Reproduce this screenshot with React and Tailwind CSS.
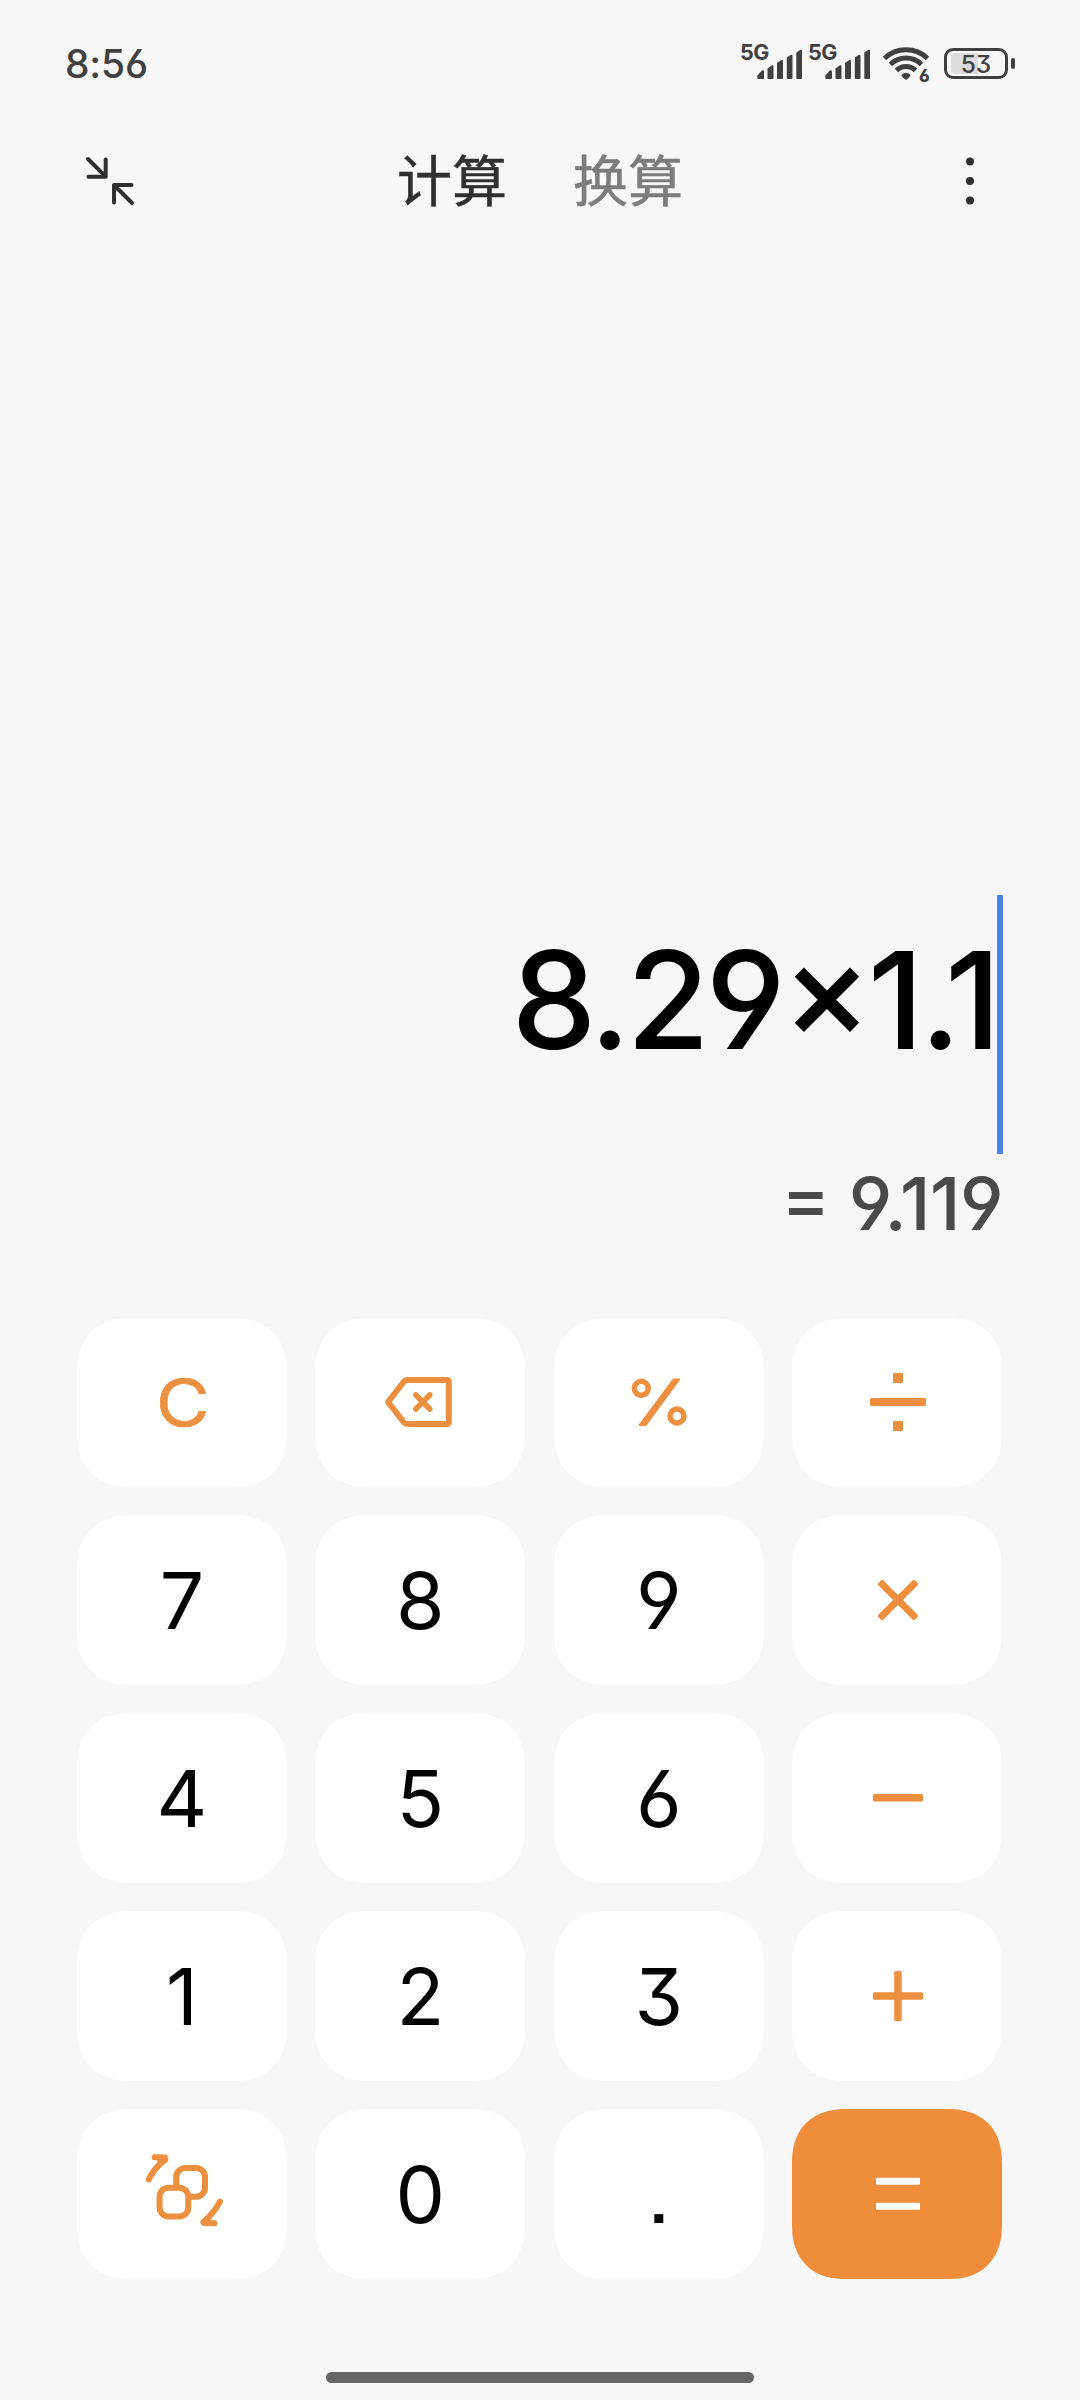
import React from "react";
import clsx from "clsx";

function Signal() {
  return (
    <div className="relative h-9 w-[62px]">
      <span className="absolute left-[-1px] top-0 text-[21.500px] leading-[15px] font-bold tracking-[-0.5px]">5G</span>
      <svg className="absolute left-4 top-0" width="46" height="36" viewBox="0 0 46 36" fill="#404040">
        <path d="M0.3 33V30.5L5 25.5Q7 24.5 7 26.500V33Q7 34 6 34H1.300Q0.300 34 0.300 33Z" />
        <path d="M10.500 33V23.500L14.500 20.500Q16.500 19.500 16.500 21.500V33Q16.500 34 15.500 34H11.500Q10.500 34 10.500 33Z" />
        <path d="M20 33V18L24 15.300Q26 14.500 26 16.500V33Q26 34 25 34H21Q20 34 20 33Z" />
        <path d="M29.800 33V12.500L33.500 10Q35.500 9 35.500 11V33Q35.500 34 34.500 34H30.800Q29.800 34 29.800 33Z" />
        <path d="M39.300 33V7.500L43 5Q45 4 45 6V33Q45 34 44 34H40.300Q39.300 34 39.300 33Z" />
      </svg>
    </div>
  );
}

function Wifi() {
  return (
    <div className="relative h-9 w-[50px]">
      <svg className="absolute left-0 top-0" width="50" height="36" viewBox="0 0 50 36" fill="none" stroke="#404040" strokeWidth="5">
        <path d="M2.500 13.500A31 31 0 0 1 45.500 13.500" />
        <path d="M8.500 19.500A22 22 0 0 1 39.500 19.500" />
        <path d="M14.500 25.500A13.500 13.500 0 0 1 33.500 25.500" />
        <path d="M20 30Q24 26.500 28 30Q28.500 31 24 34.500Q19.500 31 20 30Z" fill="#404040" stroke="#404040" strokeWidth="1" />
      </svg>
      <span className="absolute left-[37px] top-[25px] text-[17px] leading-[12px] font-extrabold">6</span>
    </div>
  );
}

function Battery() {
  return (
    <div className="flex items-center gap-[3px]">
      <div className="relative flex h-[31px] w-[64px] items-center justify-center rounded-[9px] border-[3px] border-[#404040]">
        <div className="absolute left-[4px] top-[2px] h-[21px] w-[27px] rounded-l-[4px] bg-[#dcdcdc]" />
        <span className="relative top-px text-[24.500px] leading-none font-[450]">53</span>
      </div>
      <div className="h-[11px] w-[4px] rounded-[2px] bg-[#404040]" />
    </div>
  );
}

function KeyIcon({ label, children }) {
  return (
    <svg width="80" height="80" viewBox="0 0 80 80" fill="none" className="overflow-visible" role="img" aria-label={label}>
      {children}
    </svg>
  );
}

const O = "#ec8f3f";

const Backspace = (
  <KeyIcon label="backspace">
    <path d="M8 40L24 19.500Q25.500 18 27.500 18H66.800Q68.800 18 68.800 20V60Q68.800 62 66.800 62H27.500Q25.500 62 24 60.500Z" stroke={O} strokeWidth="6" strokeLinejoin="round" />
    <path d="M35.800 33L49.800 47M49.800 33L35.800 47" stroke={O} strokeWidth="5.500" strokeLinecap="round" />
  </KeyIcon>
);
const Percent = (
  <KeyIcon label="percent">
    <circle cx="22.300" cy="26.300" r="7" stroke={O} strokeWidth="5.400" />
    <circle cx="58" cy="54" r="7" stroke={O} strokeWidth="5.400" />
    <path d="M54.500 17.200H60.500L26.800 63.200H20.300Z" fill={O} stroke={O} strokeWidth="1.500" strokeLinejoin="round" />
  </KeyIcon>
);
const Divide = (
  <KeyIcon label="divide">
    <g fill={O}>
      <rect x="13" y="36" width="56" height="8" rx="1.500" />
      <rect x="36" y="11" width="10" height="10" rx="1" />
      <rect x="36" y="59" width="10" height="10" rx="1" />
    </g>
  </KeyIcon>
);
const Times = (
  <KeyIcon label="multiply">
    <g fill={O}>
      <rect x="15" y="36.500" width="52" height="7" rx="2" transform="rotate(45 41 40)" />
      <rect x="15" y="36.500" width="52" height="7" rx="2" transform="rotate(-45 41 40)" />
    </g>
  </KeyIcon>
);
const Minus = (
  <KeyIcon label="minus">
    <rect x="16" y="36" width="50" height="7.500" rx="1.500" fill={O} />
  </KeyIcon>
);
const Plus = (
  <KeyIcon label="plus">
    <rect x="16" y="36.200" width="50" height="7.500" rx="1.500" fill={O} />
    <rect x="37.200" y="15" width="7.500" height="50" rx="1.500" fill={O} />
  </KeyIcon>
);
const Equals = (
  <KeyIcon label="equals">
    <rect x="19" y="23.700" width="44" height="7" rx="1" fill="#fff" />
    <rect x="19" y="48.700" width="44" height="7" rx="1" fill="#fff" />
  </KeyIcon>
);
const Switch = (
  <KeyIcon label="switch">
    <g stroke={O} strokeWidth="6" strokeLinecap="round" strokeLinejoin="round">
      <rect x="34.300" y="14" width="28.700" height="28.700" rx="9" />
      <rect x="17.600" y="33.700" width="28.700" height="28.700" rx="9" fill="#fff" />
      <path d="M6.800 25.500Q12 14 23.500 5.500L23 3.500L12.500 3.300" />
      <path d="M18 6L21 5" />
      <path d="M78 47.700Q71.500 60 61.300 68L61.800 69L72.300 69.300" />
      <path d="M66 67L63 68" />
    </g>
  </KeyIcon>
);

const keys = [
  <span className="block translate-x-[1px] scale-x-[1.13] text-[65px] font-[400] text-[#ec8f3f] [-webkit-text-stroke:0.6px]">C</span>, Backspace, Percent, Divide,
  "7", "8", "9", Times,
  "4", "5", "6", Minus,
  "1", "2", "3", Plus,
  Switch, "0", ".", Equals,
];

export default function App() {
  return (
    <div className="flex h-[2400px] w-[1080px] flex-col overflow-hidden bg-[#f7f7f7] font-[Inter,'Noto_Sans_CJK_SC',sans-serif] [font-feature-settings:'cv03','cv04','cv09']">
      <div className="flex h-[128px] shrink-0 justify-between pl-[65px] pr-[65px] pt-[45px] text-[#404040]">
        <span className="text-[39px] leading-[38px] font-medium tracking-[-0.2px]">8:56</span>
        <div className="flex h-9 items-center">
          <Signal />
          <div className="w-[6px]" />
          <Signal />
          <div className="w-[11px]" />
          <Wifi />
          <div className="w-[12px]" />
          <Battery />
        </div>
      </div>

      <div className="flex h-[106px] shrink-0 items-center justify-between pl-[84px] pr-[84px]">
        <svg width="52" height="52" viewBox="0 0 52 52" fill="none" stroke="#303030" strokeWidth="4" strokeLinecap="round" strokeLinejoin="round">
          <path d="M4 4L21.700 21.700V4.500M21.700 21.700H4.500" />
          <path d="M48 48L30 30H47.500M30 30V47.500" />
        </svg>
        <div className="flex gap-[66px] pb-[8px] font-['Noto_Sans_CJK_SC',sans-serif] text-[55px] leading-none [-webkit-text-stroke:0.5px]">
          <span className="text-[#303030]">计算</span>
          <span className="text-[#7c7c7c]">换算</span>
        </div>
        <svg width="52" height="52" viewBox="0 0 52 52" fill="#303030">
          <circle cx="26" cy="6.500" r="4" />
          <circle cx="26" cy="26" r="4" />
          <circle cx="26" cy="45.500" r="4" />
        </svg>
      </div>

      <div className="flex h-[1083px] shrink-0 flex-col items-end pr-[77px] pt-[661px] [font-feature-settings:'cv03','cv04','cv09','case']">
        <div className="flex h-[259px] items-start">
          <div className="mt-[21px] text-[135px] leading-[169px] font-[450] tracking-[-4px] text-black">8.29×1.1</div>
          <div className="h-[259px] w-[6px] rounded-[1px] bg-[#4f82e8]" />
        </div>
        <div className="mt-[5px] text-[73.500px] leading-[90px] font-[450] tracking-[-0.500px] text-[#4a4a4a]">= 9.119</div>
      </div>

      <div className="ml-[77px] grid w-[925.200px] shrink-0 grid-cols-4 gap-x-[28.700px] gap-y-[28.700px] pt-[0.500px]">
        {keys.map((k, i) => (
          <button
            key={i}
            className={clsx(
              "flex h-[169.300px] items-center justify-center rounded-[54px] text-[78.500px] leading-none text-black [corner-shape:superellipse(1.200)]",
              i === 19 ? "bg-[#ef8d3a]" : "bg-white",
              k === "." && "[font-feature-settings:'ss07']"
            )}
          >
            {typeof k === "string" ? <span className="block translate-y-px">{k}</span> : k}
          </button>
        ))}
      </div>

      <div className="mx-auto mt-[93px] h-[11px] w-[428px] shrink-0 rounded-full bg-[#666]" />
    </div>
  );
}
